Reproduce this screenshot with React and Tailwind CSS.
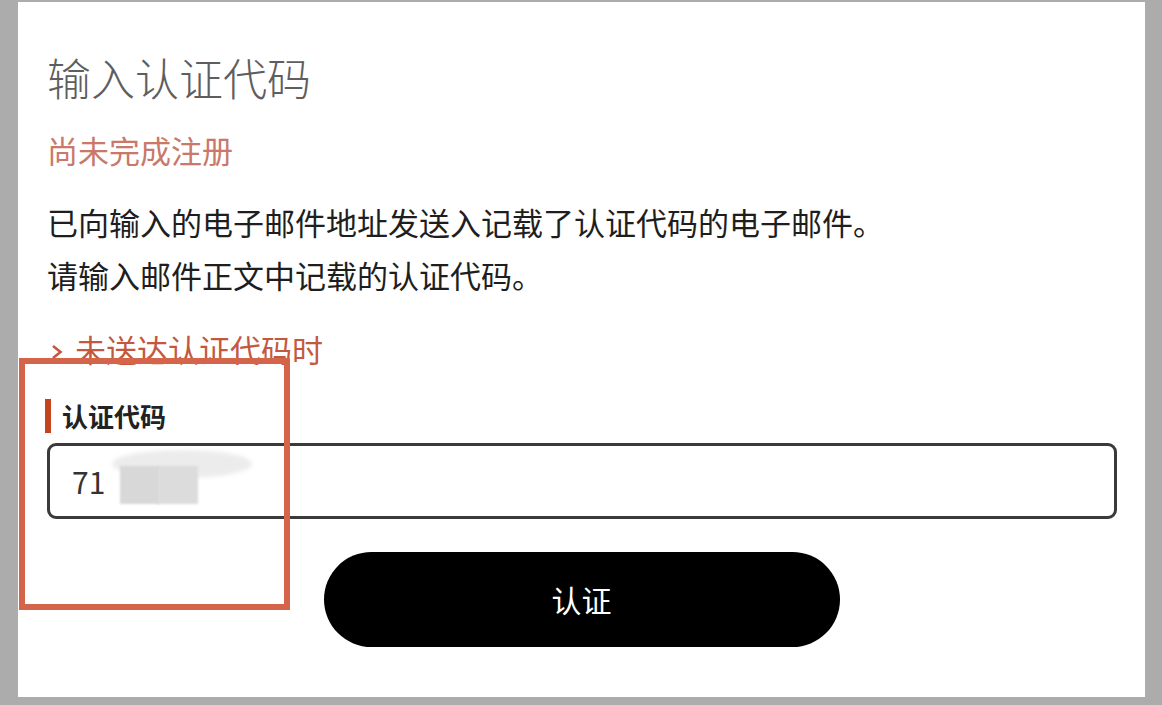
export default function App() {
	const font = { fontFamily: '"Noto Sans CJK SC", "Noto Sans", sans-serif' };

	return (
		<div
			className="relative h-[705px] w-[1162px] overflow-hidden bg-[#acacac] pl-[18px] pr-[17px] pt-[2px] pb-[8px]"
			style={font}
		>
			{/* card */}
			<div className="h-full bg-white px-[29px] pt-[49px]">
				<h1 className="text-[44px] leading-[53px] font-light text-[#5e5e5e]">
					输入认证代码
				</h1>
				<p className="mt-[26px] text-[31px] leading-[40px] text-[#c9786a]">
					尚未完成注册
				</p>
				<div className="mt-[25px] text-[31px] leading-[53px] text-[#1e1e1e]">
					<p>已向输入的电子邮件地址发送入记载了认证代码的电子邮件。</p>
					<p>请输入邮件正文中记载的认证代码。</p>
				</div>
				<a className="mt-[28px] flex items-center gap-[12px] text-[31px] leading-[40px] text-[#c4583e]">
					<svg width="12" height="16" viewBox="0 0 12 16" className="ml-[4px] mt-[6px]">
						<path d="M2 2 L9.5 8 L2 14" fill="none" stroke="currentColor" strokeWidth="2.6" />
					</svg>
					未送达认证代码时
				</a>

				{/* code field */}
				<div className="mt-[30px]">
					<label className="ml-[-2px] block border-l-[6px] border-[#c4441f] pl-[11px] text-[26px] leading-[34px] font-bold text-[#222]">
						认证代码
					</label>
					<div className="relative mt-[10px] flex h-[76px] w-[1070px] items-center rounded-[9px] border-[3px] border-[#3a3a3a] pl-[22px] text-[30px] text-[#333]">
						<span>71</span>
						{/* blurred redaction */}
						<span className="absolute left-[62px] top-[4px] h-[28px] w-[140px] rounded-[50%] bg-[#ececec] blur-[2px]" />
						<span className="absolute left-[70px] top-[20px] h-[38px] w-[40px] bg-[#d8d8d8] blur-[1px]" />
						<span className="absolute left-[108px] top-[20px] h-[38px] w-[40px] bg-[#dcdcdc] blur-[1px]" />
					</div>
				</div>

				<button className="mx-auto mt-[33px] flex h-[95px] w-[516px] items-center justify-center rounded-full bg-black text-[30px] text-white">
					认证
				</button>
			</div>

			{/* annotation frame */}
			<div className="absolute left-[19px] top-[358px] h-[252px] w-[271px] border-[6px] border-[#d4654a]" />
		</div>
	);
}
